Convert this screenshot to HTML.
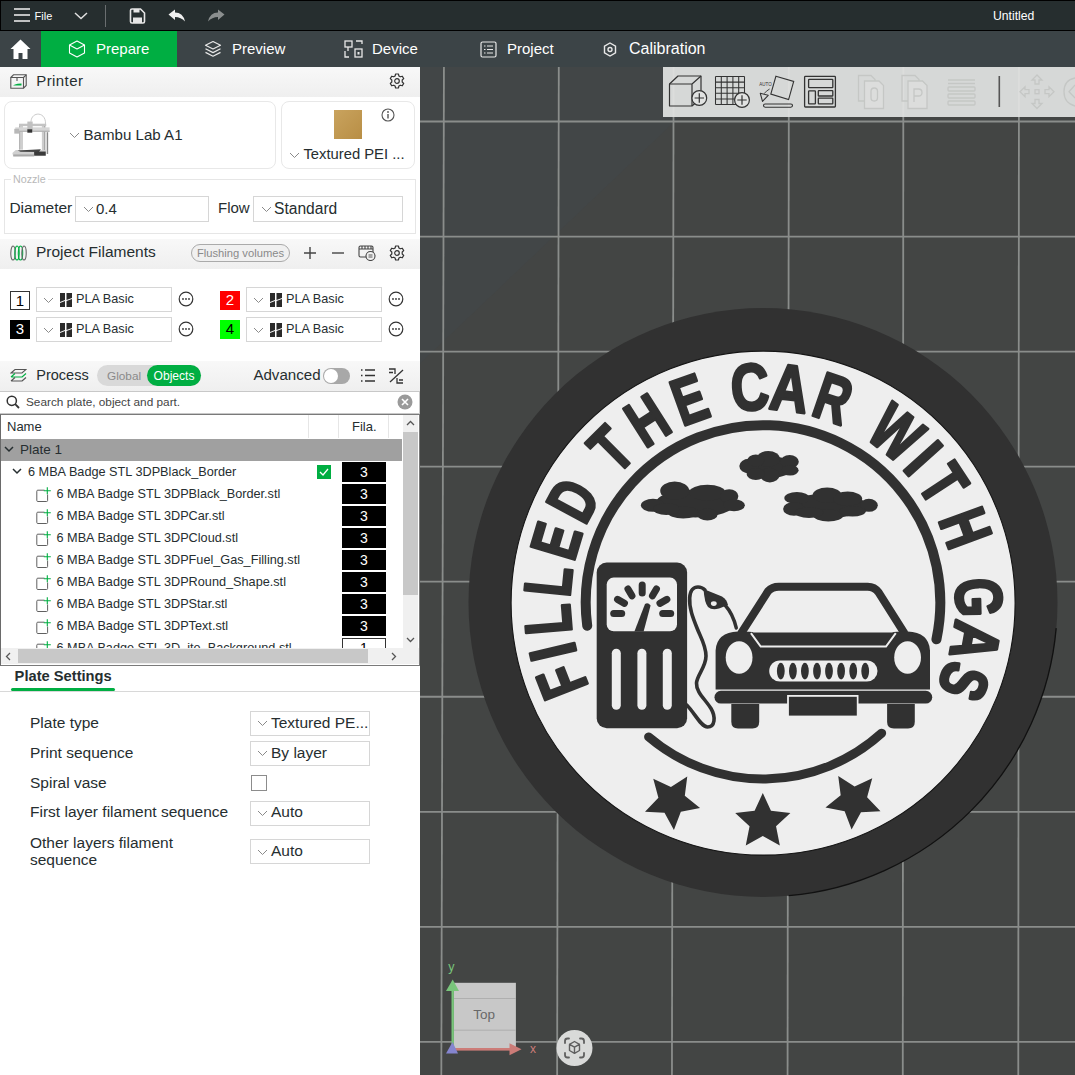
<!DOCTYPE html>
<html><head><meta charset="utf-8">
<style>
*{margin:0;padding:0;box-sizing:border-box}
html,body{width:1075px;height:1075px;overflow:hidden;background:#fff;font-family:"Liberation Sans",sans-serif;color:#262e30}
.a{position:absolute;white-space:nowrap}
#top{position:absolute;left:0;top:0;width:1075px;height:31px;background:#262e2f;border-top:1px solid #000;border-left:1px solid #000;border-bottom:1px solid #000}
#tabs{position:absolute;left:0;top:31px;width:1075px;height:36px;background:#3c4447}
#left{position:absolute;left:0;top:67px;width:420px;height:1008px;background:#fff;overflow:hidden}
#vp{position:absolute;left:420px;top:67px;width:655px;height:1008px;background:#434544;overflow:hidden}
.hdr{position:absolute;left:0;width:420px;height:30px;background:linear-gradient(#f8f8f8,#efefef)}
.tw{color:#fff;font-size:15px}
.dd{position:absolute;border:1px solid #d6d6d6;background:#fff}
.chev{position:absolute;width:7px;height:7px;border-right:1px solid #8a8a8a;border-bottom:1px solid #8a8a8a;transform:rotate(45deg)}
.lbl{font-size:15.5px;color:#262e30}
.row{position:absolute;left:0;width:402px;height:22px}
.obj{font-size:12.7px;color:#262e30}
.fbox{position:absolute;left:342px;width:44px;height:20px;background:#000;color:#fff;font-size:14px;text-align:center;line-height:20px}
.part{position:absolute;left:36px;width:16px;height:16px}
</style></head><body>

<!-- TOP BAR -->
<div id="top">
  <svg class="a" style="left:12px;top:7.3px" width="18" height="14" viewBox="0 0 18 14"><g stroke="#f4f4f4" stroke-width="1.5"><line x1="1" y1="1" x2="17" y2="1"/><line x1="1" y1="7" x2="17" y2="7"/><line x1="1" y1="13" x2="17" y2="13"/></g></svg>
  <div class="a" style="left:33.6px;top:9px;font-size:11px;color:#fff">File</div>
  <svg class="a" style="left:73px;top:11px" width="14" height="8" viewBox="0 0 14 8"><polyline points="1,1 7,6.5 13,1" fill="none" stroke="#e0e0e0" stroke-width="1.5"/></svg>
  <div class="a" style="left:104px;top:4px;width:1px;height:22px;background:#6a6e70"></div>
  <svg class="a" style="left:128px;top:7px" width="17" height="16" viewBox="0 0 17 16"><path d="M1.5 2.5 Q1.5 1 3 1 L11.5 1 L15.5 5 L15.5 13.5 Q15.5 15 14 15 L3 15 Q1.5 15 1.5 13.5 Z" fill="none" stroke="#e6e6e6" stroke-width="1.6"/><rect x="4.5" y="1" width="6" height="3.5" fill="#e6e6e6"/><rect x="4" y="9.5" width="9" height="5.5" fill="#e6e6e6"/></svg>
  <svg class="a" style="left:167px;top:8px" width="18" height="14" viewBox="0 0 18 14"><path d="M0.5 5.5 L7 0.5 L7 3.5 Q15 3.5 17 12.5 Q13 8 7 8 L7 11 Z" fill="#f0f0f0"/></svg>
  <svg class="a" style="left:206px;top:8px" width="18" height="14" viewBox="0 0 18 14"><path d="M17.5 5.5 L11 0.5 L11 3.5 Q3 3.5 1 12.5 Q5 8 11 8 L11 11 Z" fill="#8a8e8e"/></svg>
  <div class="a" style="left:992px;top:8px;font-size:12.2px;color:#fff">Untitled</div>
</div>

<!-- TABS -->
<div id="tabs">
  <svg class="a" style="left:10px;top:8px" width="21" height="21" viewBox="0 0 21 21"><path d="M10.5 0.5 L20.5 10 L17.5 10 L17.5 20 L12.5 20 L12.5 14 L8.5 14 L8.5 20 L3.5 20 L3.5 10 L0.5 10 Z" fill="#fff"/></svg>
  <div class="a" style="left:41px;top:0;width:136px;height:36px;background:#00ae42"></div>
  <svg class="a" style="left:68px;top:9px" width="18" height="18" viewBox="0 0 18 18"><g fill="none" stroke="#fff" stroke-width="1.1" stroke-linejoin="round"><path d="M9 1 L16.5 5 L16.5 13 L9 17 L1.5 13 L1.5 5 Z"/><path d="M1.5 5 L9 9 L16.5 5"/></g></svg>
  <div class="a tw" style="left:96px;top:9px">Prepare</div>
  <svg class="a" style="left:204px;top:9px" width="18" height="18" viewBox="0 0 18 18"><g fill="none" stroke="#e8e8e8" stroke-width="1.2" stroke-linejoin="round"><path d="M9 1.5 L16.5 5.2 L9 9 L1.5 5.2 Z"/><path d="M1.5 8.8 L9 12.6 L16.5 8.8"/><path d="M1.5 12.4 L9 16.2 L16.5 12.4"/></g></svg>
  <div class="a tw" style="left:232px;top:9px">Preview</div>
  <svg class="a" style="left:344px;top:9px" width="20" height="18" viewBox="0 0 20 18"><g fill="none" stroke="#e8e8e8" stroke-width="1.3"><rect x="1" y="1" width="7" height="6"/><path d="M12 1 L18 1 L18 4 M1 11 L1 17 L5 17 M4 7 L4 11"/><rect x="11" y="9" width="7" height="8"/><rect x="13.5" y="12" width="2" height="2.5" fill="#e8e8e8" stroke="none"/></g></svg>
  <div class="a tw" style="left:372px;top:9px">Device</div>
  <svg class="a" style="left:480px;top:10px" width="17" height="17" viewBox="0 0 17 17"><g fill="none" stroke="#e8e8e8" stroke-width="1.2"><rect x="1" y="1" width="15" height="15" rx="1.5"/><path d="M4 5 L5.5 5 M7 5 L13 5 M4 8.5 L5.5 8.5 M7 8.5 L13 8.5 M4 12 L5.5 12 M7 12 L13 12"/></g></svg>
  <div class="a tw" style="left:507px;top:9px">Project</div>
  <svg class="a" style="left:603px;top:11px" width="14" height="15" viewBox="0 0 14 15"><g fill="none" stroke="#e8e8e8" stroke-width="1.4"><path d="M7 1 L12.5 4.2 L12.5 10.8 L7 14 L1.5 10.8 L1.5 4.2 Z"/><circle cx="7" cy="7.5" r="2"/></g></svg>
  <div class="a tw" style="left:629px;top:9px;font-size:16px">Calibration</div>
</div>

<div id="left">
  <!-- Printer header (page y 67-97) -->
  <div class="hdr" style="top:0"></div>
  <svg class="a" style="left:10px;top:7px" width="17" height="15" viewBox="0 0 17 15"><g fill="none" stroke="#555" stroke-width="1.1"><path d="M0.8 3.5 L3.5 0.8 L16.2 0.8 L16.2 11.5 L13.5 14.2 L0.8 14.2 Z"/><path d="M0.8 3.5 L13.5 3.5 L13.5 14.2 M13.5 3.5 L16.2 0.8"/><path d="M7 4 L7 7"/></g><path d="M3 11.5 L11.5 11.5 L11.5 9.5 Q7 9.5 5 10.5 Z" fill="#00ae42"/></svg>
  <div class="a" style="left:36.3px;top:4.8px;font-size:15px;letter-spacing:0.4px">Printer</div>
  <svg class="a" style="left:389px;top:6px" width="16" height="16" viewBox="0 0 16 16"><path d="M6.6 1 L9.4 1 L9.9 3 L11.3 3.8 L13.3 3.2 L14.7 5.6 L13.2 7 L13.2 9 L14.7 10.4 L13.3 12.8 L11.3 12.2 L9.9 13 L9.4 15 L6.6 15 L6.1 13 L4.7 12.2 L2.7 12.8 L1.3 10.4 L2.8 9 L2.8 7 L1.3 5.6 L2.7 3.2 L4.7 3.8 L6.1 3 Z" fill="none" stroke="#333" stroke-width="1.2" stroke-linejoin="round"/><circle cx="8" cy="8" r="2.3" fill="none" stroke="#333" stroke-width="1.2"/></svg>

  <!-- printer card page y 101-168 -->
  <div class="a" style="left:4px;top:34px;width:272px;height:68px;border:1px solid #e8e8e8;border-radius:8px"></div>
  <svg class="a" style="left:8px;top:41px" width="48" height="52" viewBox="8 108 48 52">

<path d="M30.98 123.48 C30.01 110.90 46.22 110.90 45.49 123.97" fill="none" stroke="#b5b5b5" stroke-width="0.7"/>
<rect x="19.13" y="123.97" width="3.87" height="25.64" fill="#cfcfcf" />
<rect x="19.13" y="123.97" width="0.97" height="25.64" fill="#b0b0b0" />
<rect x="41.87" y="124.45" width="3.39" height="27.09" fill="#cdcdcd" />
<rect x="44.28" y="124.45" width="0.97" height="27.09" fill="#9a9a9a" />
<rect x="19.13" y="123.72" width="27.09" height="2.42" fill="#c4c4c4" />
<rect x="15.26" y="127.35" width="34.35" height="4.35" fill="#d6d6d6" />
<rect x="15.26" y="130.74" width="34.35" height="0.97" fill="#a8a8a8" />
<rect x="14.29" y="128.80" width="4.84" height="4.84" fill="#b8b8b8" />
<rect x="27.35" y="121.55" width="5.32" height="10.64" fill="#c0c0c0" />
<rect x="27.35" y="129.29" width="4.84" height="3.39" fill="#333" />
<rect x="46.70" y="132.19" width="1.45" height="21.77" fill="#888" />
<path d="M12.35 152.99 L15.74 150.09 L45.74 150.09 L45.74 155.90 L13.32 156.38 Z" fill="#d0d0d0"/>
<path d="M17.68 150.57 L40.90 149.36 L38.96 152.03 L20.58 151.78 Z" fill="#444"/>
<rect x="34.12" y="151.54" width="11.61" height="4.11" fill="#3a3a3a" />
<rect x="13.32" y="154.44" width="20.80" height="1.94" fill="#a8a8a8" />
</svg>
  <svg class="a" style="left:69px;top:65px" width="11" height="7" viewBox="0 0 11 7"><polyline points="1,1 5.5,5.5 10,1" fill="none" stroke="#8a8a8a" stroke-width="1"/></svg>
  <div class="a" style="left:83.5px;top:59px;font-size:15.1px">Bambu Lab A1</div>

  <!-- plate card -->
  <div class="a" style="left:281px;top:34px;width:134px;height:68px;border:1px solid #e8e8e8;border-radius:8px"></div>
  <div class="a" style="left:334px;top:43px;width:28px;height:29px;background:linear-gradient(135deg,#c9a35e,#b88e45)"></div>
  <svg class="a" style="left:381px;top:41px" width="14" height="14" viewBox="0 0 14 14"><circle cx="7" cy="7" r="6" fill="none" stroke="#555" stroke-width="1.1"/><rect x="6.3" y="6" width="1.4" height="4.5" fill="#555"/><circle cx="7" cy="4" r="0.9" fill="#555"/></svg>
  <svg class="a" style="left:289px;top:85px" width="11" height="7" viewBox="0 0 11 7"><polyline points="1,1 5.5,5.5 10,1" fill="none" stroke="#8a8a8a" stroke-width="1"/></svg>
  <div class="a" style="left:303.4px;top:79px;font-size:14.8px">Textured PEI ...</div>

  <!-- Nozzle fieldset page y 179-233 -->
  <div class="a" style="left:4px;top:112px;width:412px;height:55px;border:1px solid #e6e6e6"></div>
  <div class="a" style="left:11px;top:105px;padding:0 2px;background:#fff;font-size:10.7px;color:#b8b8b8;margin-top:1px">Nozzle</div>
  <div class="a" style="left:9.4px;top:132.3px;font-size:15.5px">Diameter</div>
  <div class="dd" style="left:75px;top:129px;width:134px;height:26px"></div>
  <svg class="a" style="left:83px;top:139px" width="11" height="7" viewBox="0 0 11 7"><polyline points="1,1 5.5,5.5 10,1" fill="none" stroke="#8a8a8a" stroke-width="1"/></svg>
  <div class="a" style="left:96px;top:133px;font-size:15px">0.4</div>
  <div class="a" style="left:218px;top:132px;font-size:15px">Flow</div>
  <div class="dd" style="left:253px;top:129px;width:150px;height:26px"></div>
  <svg class="a" style="left:261px;top:139px" width="11" height="7" viewBox="0 0 11 7"><polyline points="1,1 5.5,5.5 10,1" fill="none" stroke="#8a8a8a" stroke-width="1"/></svg>
  <div class="a" style="left:274px;top:133px;font-size:15.6px">Standard</div>

  <!-- Project Filaments header page y 239-268 -->
  <div class="hdr" style="top:172px;height:30px"></div>
  <svg class="a" style="left:10px;top:178px" width="17" height="16" viewBox="0 0 17 16"><g fill="none" stroke-width="1.1"><ellipse cx="3" cy="8" rx="2.2" ry="7" stroke="#666"/><ellipse cx="7" cy="8" rx="2.2" ry="7" stroke="#00ae42"/><ellipse cx="10.5" cy="8" rx="2.2" ry="7" stroke="#00ae42"/><ellipse cx="14" cy="8" rx="2.2" ry="7" stroke="#666"/></g></svg>
  <div class="a" style="left:36px;top:176px;font-size:15.5px">Project Filaments</div>
  <div class="a" style="left:191px;top:177px;width:99px;height:18px;border:1px solid #aaa;border-radius:9px;background:#f0f0f0;font-size:11.2px;color:#8a8a8a;text-align:center;line-height:16px">Flushing volumes</div>
  <svg class="a" style="left:303px;top:179px" width="14" height="14" viewBox="0 0 14 14"><path d="M7 1 L7 13 M1 7 L13 7" stroke="#444" stroke-width="1.4"/></svg>
  <svg class="a" style="left:331px;top:179px" width="14" height="14" viewBox="0 0 14 14"><path d="M1 7 L13 7" stroke="#444" stroke-width="1.4"/></svg>
  <svg class="a" style="left:358px;top:177px" width="18" height="17" viewBox="0 0 18 17"><g fill="none" stroke="#444" stroke-width="1.1"><rect x="1" y="2" width="14" height="11" rx="1.5"/><path d="M1 5 L15 5 M4 2 L4 5 M7 2 L7 5 M10 2 L10 5 M13 2 L13 5"/></g><circle cx="12.5" cy="12" r="4.5" fill="#f2f2f2" stroke="#444" stroke-width="1.1"/><path d="M10.5 11 L14.5 11 M10.5 13 L14.5 13" stroke="#444" stroke-width="0.9"/></svg>
  <svg class="a" style="left:389px;top:178px" width="16" height="16" viewBox="0 0 16 16"><path d="M6.6 1 L9.4 1 L9.9 3 L11.3 3.8 L13.3 3.2 L14.7 5.6 L13.2 7 L13.2 9 L14.7 10.4 L13.3 12.8 L11.3 12.2 L9.9 13 L9.4 15 L6.6 15 L6.1 13 L4.7 12.2 L2.7 12.8 L1.3 10.4 L2.8 9 L2.8 7 L1.3 5.6 L2.7 3.2 L4.7 3.8 L6.1 3 Z" fill="none" stroke="#333" stroke-width="1.2" stroke-linejoin="round"/><circle cx="8" cy="8" r="2.3" fill="none" stroke="#333" stroke-width="1.2"/></svg>

<div class="a" style="left:10px;top:224px;width:20px;height:19px;background:#fff;border:1px solid #333;color:#000;font-size:15px;text-align:center;line-height:18px">1</div>
<div class="dd" style="left:36px;top:220px;width:136px;height:25px"></div>
<svg class="a" style="left:43px;top:230px" width="11" height="7" viewBox="0 0 11 7"><polyline points="1,1 5.5,5.5 10,1" fill="none" stroke="#8a8a8a" stroke-width="1"/></svg>
<svg class="a" style="left:60px;top:226px" width="12" height="14" viewBox="0 0 12 14"><path d="M0 0 L5 0 L5 7 L0 9 Z M0 10 L5 8 L5 14 L0 14 Z M6.5 0 L12 0 L12 5 L6.5 7 Z M6.5 8 L12 6 L12 14 L6.5 14 Z" fill="#2a2a2a"/></svg>
<div class="a" style="left:76px;top:225.1px;font-size:12.7px;">PLA Basic</div>
<svg class="a" style="left:178px;top:224px" width="16" height="16" viewBox="0 0 16 16"><circle cx="8" cy="8" r="6.8" fill="none" stroke="#333" stroke-width="1.2"/><circle cx="5" cy="8" r="0.9" fill="#333"/><circle cx="8" cy="8" r="0.9" fill="#333"/><circle cx="11" cy="8" r="0.9" fill="#333"/></svg>
<div class="a" style="left:10px;top:253px;width:20px;height:19px;background:#000;color:#fff;font-size:15px;text-align:center;line-height:18px">3</div>
<div class="dd" style="left:36px;top:250px;width:136px;height:25px"></div>
<svg class="a" style="left:43px;top:260px" width="11" height="7" viewBox="0 0 11 7"><polyline points="1,1 5.5,5.5 10,1" fill="none" stroke="#8a8a8a" stroke-width="1"/></svg>
<svg class="a" style="left:60px;top:256px" width="12" height="14" viewBox="0 0 12 14"><path d="M0 0 L5 0 L5 7 L0 9 Z M0 10 L5 8 L5 14 L0 14 Z M6.5 0 L12 0 L12 5 L6.5 7 Z M6.5 8 L12 6 L12 14 L6.5 14 Z" fill="#2a2a2a"/></svg>
<div class="a" style="left:76px;top:255.4px;font-size:12.7px;">PLA Basic</div>
<svg class="a" style="left:178px;top:254px" width="16" height="16" viewBox="0 0 16 16"><circle cx="8" cy="8" r="6.8" fill="none" stroke="#333" stroke-width="1.2"/><circle cx="5" cy="8" r="0.9" fill="#333"/><circle cx="8" cy="8" r="0.9" fill="#333"/><circle cx="11" cy="8" r="0.9" fill="#333"/></svg>
<div class="a" style="left:220px;top:224px;width:20px;height:19px;background:#ff0000;color:#fff;font-size:15px;text-align:center;line-height:18px">2</div>
<div class="dd" style="left:246px;top:220px;width:136px;height:25px"></div>
<svg class="a" style="left:253px;top:230px" width="11" height="7" viewBox="0 0 11 7"><polyline points="1,1 5.5,5.5 10,1" fill="none" stroke="#8a8a8a" stroke-width="1"/></svg>
<svg class="a" style="left:270px;top:226px" width="12" height="14" viewBox="0 0 12 14"><path d="M0 0 L5 0 L5 7 L0 9 Z M0 10 L5 8 L5 14 L0 14 Z M6.5 0 L12 0 L12 5 L6.5 7 Z M6.5 8 L12 6 L12 14 L6.5 14 Z" fill="#2a2a2a"/></svg>
<div class="a" style="left:286px;top:225.1px;font-size:12.7px;">PLA Basic</div>
<svg class="a" style="left:388px;top:224px" width="16" height="16" viewBox="0 0 16 16"><circle cx="8" cy="8" r="6.8" fill="none" stroke="#333" stroke-width="1.2"/><circle cx="5" cy="8" r="0.9" fill="#333"/><circle cx="8" cy="8" r="0.9" fill="#333"/><circle cx="11" cy="8" r="0.9" fill="#333"/></svg>
<div class="a" style="left:220px;top:253px;width:20px;height:19px;background:#00ff00;color:#000;font-size:15px;text-align:center;line-height:18px">4</div>
<div class="dd" style="left:246px;top:250px;width:136px;height:25px"></div>
<svg class="a" style="left:253px;top:260px" width="11" height="7" viewBox="0 0 11 7"><polyline points="1,1 5.5,5.5 10,1" fill="none" stroke="#8a8a8a" stroke-width="1"/></svg>
<svg class="a" style="left:270px;top:256px" width="12" height="14" viewBox="0 0 12 14"><path d="M0 0 L5 0 L5 7 L0 9 Z M0 10 L5 8 L5 14 L0 14 Z M6.5 0 L12 0 L12 5 L6.5 7 Z M6.5 8 L12 6 L12 14 L6.5 14 Z" fill="#2a2a2a"/></svg>
<div class="a" style="left:286px;top:255.4px;font-size:12.7px;">PLA Basic</div>
<svg class="a" style="left:388px;top:254px" width="16" height="16" viewBox="0 0 16 16"><circle cx="8" cy="8" r="6.8" fill="none" stroke="#333" stroke-width="1.2"/><circle cx="5" cy="8" r="0.9" fill="#333"/><circle cx="8" cy="8" r="0.9" fill="#333"/><circle cx="11" cy="8" r="0.9" fill="#333"/></svg>

  <!-- Process header page y 361-390 -->
  <div class="hdr" style="top:294px;height:30px"></div>
  <svg class="a" style="left:10px;top:301px" width="17" height="16" viewBox="0 0 17 16"><g fill="none" stroke-width="1.1"><path d="M1 5 L5 1.5 L16 1.5 L12 5 Z" stroke="#555"/><path d="M1 9 L5 5.5 M12 9 L16 5.5 M1 9 L12 9" stroke="#00ae42"/><path d="M1 13 L5 9.5 M12 13 L16 9.5 M1 13 L12 13" stroke="#555"/></g></svg>
  <div class="a" style="left:36.3px;top:300px;font-size:14.5px">Process</div>
  <div class="a" style="left:97px;top:298px;width:104px;height:21px;border-radius:11px;background:#d9d9d9"></div>
  <div class="a" style="left:107px;top:302px;font-size:11.8px;color:#8a8a8a">Global</div>
  <div class="a" style="left:147px;top:298px;width:54px;height:21px;border-radius:11px;background:#00ae42"></div>
  <div class="a" style="left:153.5px;top:302px;font-size:12.1px;color:#fff">Objects</div>
  <div class="a" style="left:253.4px;top:299px;font-size:15.1px">Advanced</div>
  <div class="a" style="left:323px;top:301px;width:27px;height:16px;border-radius:8px;background:#a8a8a8"></div>
  <div class="a" style="left:324px;top:302px;width:14px;height:14px;border-radius:7px;background:#fff"></div>
  <svg class="a" style="left:360px;top:301px" width="16" height="15" viewBox="0 0 16 15"><g stroke="#333" stroke-width="1.4"><path d="M5 2 L15 2 M5 7.5 L15 7.5 M5 13 L15 13"/><path d="M1 2 L2.5 2 M1 7.5 L2.5 7.5 M1 13 L2.5 13"/></g></svg>
  <svg class="a" style="left:388px;top:301px" width="16" height="16" viewBox="0 0 16 16"><g fill="none" stroke="#333" stroke-width="1.3"><path d="M1 1 L7 1 L7 6"/><path d="M15 2 L2 14"/><path d="M9 10 L9 15 L15 15"/><path d="M1 4.5 L5 4.5 M11 12 L15 12"/></g></svg>

  <!-- search page y 391-413 -->
  <div class="a" style="left:0;top:324px;width:420px;height:23px;border:1px solid #c8c8c8;border-left:none;background:#fff"></div>
  <svg class="a" style="left:6px;top:328px" width="14" height="14" viewBox="0 0 14 14"><circle cx="5.8" cy="5.8" r="4.6" fill="none" stroke="#333" stroke-width="1.5"/><path d="M9.2 9.2 L13 13" stroke="#333" stroke-width="1.8"/></svg>
  <div class="a" style="left:26px;top:328px;font-size:11.8px;color:#444">Search plate, object and part.</div>
  <svg class="a" style="left:397px;top:327px" width="16" height="16" viewBox="0 0 16 16"><circle cx="8" cy="8" r="7.5" fill="#9a9a9a"/><path d="M5 5 L11 11 M11 5 L5 11" stroke="#fff" stroke-width="1.6"/></svg>

<div class="a" style="left:0;top:347px;width:420px;height:252px;border:1px solid #7a7a7a;border-left:1px solid #6a6a6a"></div>
<div class="a" style="left:7px;top:352.0px;font-size:13px;">Name</div>
<div class="a" style="left:308px;top:348px;width:1px;height:23px;background:#e6e6e6"></div>
<div class="a" style="left:338px;top:348px;width:1px;height:23px;background:#e6e6e6"></div>
<div class="a" style="left:388px;top:348px;width:1px;height:23px;background:#e6e6e6"></div>
<div class="a" style="left:352px;top:352.0px;font-size:13px;">Fila.</div>
<div class="a" style="left:1px;top:372px;width:401px;height:22px;background:#a0a0a0"></div>
<svg class="a" style="left:4px;top:379px" width="10" height="7" viewBox="0 0 10 7"><polyline points="1,1 5,5 9,1" fill="none" stroke="#262e30" stroke-width="1.5"/></svg>
<div class="a" style="left:20px;top:375.1px;font-size:13.5px;">Plate 1</div>
<svg class="a" style="left:12px;top:401px" width="10" height="7" viewBox="0 0 10 7"><polyline points="1,1 5,5 9,1" fill="none" stroke="#262e30" stroke-width="1.5"/></svg>
<div class="a" style="left:28px;top:397.8px;font-size:12.7px;">6 MBA Badge STL 3DPBlack_Border</div>
<div class="a" style="left:317px;top:398px;width:14px;height:14px;background:#00ae42"></div>
<svg class="a" style="left:317px;top:398px" width="14" height="14" viewBox="0 0 14 14"><polyline points="3,7 6,10 11,4" fill="none" stroke="#fff" stroke-width="1.3"/></svg>
<div class="fbox" style="top:395px">3</div>
<div class="a" style="left:0;top:0;width:420px;height:581px;overflow:hidden"><svg class="a" style="left:36px;top:418px" width="16" height="18" viewBox="0 0 16 18"><path d="M8.5 5.2 L1.8 5.2 Q0.8 5.2 0.8 6.2 L0.8 15.5 Q0.8 16.5 1.8 16.5 L10.6 16.5 Q11.6 16.5 11.6 15.5 L11.6 9.5" fill="none" stroke="#606060" stroke-width="1"/><path d="M11.3 2.3 L11.3 9.3 M7.8 5.8 L14.8 5.8" stroke="#00ae42" stroke-width="1.1"/></svg>
<div class="a" style="left:56.5px;top:419.9px;font-size:12.7px;">6 MBA Badge STL 3DPBlack_Border.stl</div>
<div class="fbox" style="top:417px">3</div>
<svg class="a" style="left:36px;top:440px" width="16" height="18" viewBox="0 0 16 18"><path d="M8.5 5.2 L1.8 5.2 Q0.8 5.2 0.8 6.2 L0.8 15.5 Q0.8 16.5 1.8 16.5 L10.6 16.5 Q11.6 16.5 11.6 15.5 L11.6 9.5" fill="none" stroke="#606060" stroke-width="1"/><path d="M11.3 2.3 L11.3 9.3 M7.8 5.8 L14.8 5.8" stroke="#00ae42" stroke-width="1.1"/></svg>
<div class="a" style="left:56.5px;top:441.9px;font-size:12.7px;">6 MBA Badge STL 3DPCar.stl</div>
<div class="fbox" style="top:439px">3</div>
<svg class="a" style="left:36px;top:462px" width="16" height="18" viewBox="0 0 16 18"><path d="M8.5 5.2 L1.8 5.2 Q0.8 5.2 0.8 6.2 L0.8 15.5 Q0.8 16.5 1.8 16.5 L10.6 16.5 Q11.6 16.5 11.6 15.5 L11.6 9.5" fill="none" stroke="#606060" stroke-width="1"/><path d="M11.3 2.3 L11.3 9.3 M7.8 5.8 L14.8 5.8" stroke="#00ae42" stroke-width="1.1"/></svg>
<div class="a" style="left:56.5px;top:463.9px;font-size:12.7px;">6 MBA Badge STL 3DPCloud.stl</div>
<div class="fbox" style="top:461px">3</div>
<svg class="a" style="left:36px;top:484px" width="16" height="18" viewBox="0 0 16 18"><path d="M8.5 5.2 L1.8 5.2 Q0.8 5.2 0.8 6.2 L0.8 15.5 Q0.8 16.5 1.8 16.5 L10.6 16.5 Q11.6 16.5 11.6 15.5 L11.6 9.5" fill="none" stroke="#606060" stroke-width="1"/><path d="M11.3 2.3 L11.3 9.3 M7.8 5.8 L14.8 5.8" stroke="#00ae42" stroke-width="1.1"/></svg>
<div class="a" style="left:56.5px;top:485.9px;font-size:12.7px;">6 MBA Badge STL 3DPFuel_Gas_Filling.stl</div>
<div class="fbox" style="top:483px">3</div>
<svg class="a" style="left:36px;top:506px" width="16" height="18" viewBox="0 0 16 18"><path d="M8.5 5.2 L1.8 5.2 Q0.8 5.2 0.8 6.2 L0.8 15.5 Q0.8 16.5 1.8 16.5 L10.6 16.5 Q11.6 16.5 11.6 15.5 L11.6 9.5" fill="none" stroke="#606060" stroke-width="1"/><path d="M11.3 2.3 L11.3 9.3 M7.8 5.8 L14.8 5.8" stroke="#00ae42" stroke-width="1.1"/></svg>
<div class="a" style="left:56.5px;top:507.9px;font-size:12.7px;">6 MBA Badge STL 3DPRound_Shape.stl</div>
<div class="fbox" style="top:505px">3</div>
<svg class="a" style="left:36px;top:528px" width="16" height="18" viewBox="0 0 16 18"><path d="M8.5 5.2 L1.8 5.2 Q0.8 5.2 0.8 6.2 L0.8 15.5 Q0.8 16.5 1.8 16.5 L10.6 16.5 Q11.6 16.5 11.6 15.5 L11.6 9.5" fill="none" stroke="#606060" stroke-width="1"/><path d="M11.3 2.3 L11.3 9.3 M7.8 5.8 L14.8 5.8" stroke="#00ae42" stroke-width="1.1"/></svg>
<div class="a" style="left:56.5px;top:529.9px;font-size:12.7px;">6 MBA Badge STL 3DPStar.stl</div>
<div class="fbox" style="top:527px">3</div>
<svg class="a" style="left:36px;top:550px" width="16" height="18" viewBox="0 0 16 18"><path d="M8.5 5.2 L1.8 5.2 Q0.8 5.2 0.8 6.2 L0.8 15.5 Q0.8 16.5 1.8 16.5 L10.6 16.5 Q11.6 16.5 11.6 15.5 L11.6 9.5" fill="none" stroke="#606060" stroke-width="1"/><path d="M11.3 2.3 L11.3 9.3 M7.8 5.8 L14.8 5.8" stroke="#00ae42" stroke-width="1.1"/></svg>
<div class="a" style="left:56.5px;top:551.9px;font-size:12.7px;">6 MBA Badge STL 3DPText.stl</div>
<div class="fbox" style="top:549px">3</div>
<svg class="a" style="left:36px;top:572px" width="16" height="18" viewBox="0 0 16 18"><path d="M8.5 5.2 L1.8 5.2 Q0.8 5.2 0.8 6.2 L0.8 15.5 Q0.8 16.5 1.8 16.5 L10.6 16.5 Q11.6 16.5 11.6 15.5 L11.6 9.5" fill="none" stroke="#606060" stroke-width="1"/><path d="M11.3 2.3 L11.3 9.3 M7.8 5.8 L14.8 5.8" stroke="#00ae42" stroke-width="1.1"/></svg>
<div class="a" style="left:56.5px;top:573.9px;font-size:12.7px;">6 MBA Badge STL 3D_ite_Background.stl</div>
<div class="fbox" style="top:571px;background:#fff;color:#000;border:1px solid #333;line-height:18px">1</div></div>
<div class="a" style="left:403px;top:348px;width:15px;height:233px;background:#f0f0f0"></div>
<div class="a" style="left:403px;top:365px;width:15px;height:163px;background:#c8c8c8"></div>
<svg class="a" style="left:406px;top:353px" width="9" height="6" viewBox="0 0 9 6"><polyline points="1,5 4.5,1.5 8,5" fill="none" stroke="#555" stroke-width="1.3"/></svg>
<svg class="a" style="left:406px;top:570px" width="9" height="6" viewBox="0 0 9 6"><polyline points="1,1 4.5,4.5 8,1" fill="none" stroke="#555" stroke-width="1.3"/></svg>
<div class="a" style="left:1px;top:581px;width:418px;height:16px;background:#f0f0f0"></div>
<div class="a" style="left:18px;top:582px;width:350px;height:14px;background:#c8c8c8"></div>
<svg class="a" style="left:5px;top:585px" width="6" height="9" viewBox="0 0 6 9"><polyline points="5,1 1.5,4.5 5,8" fill="none" stroke="#555" stroke-width="1.3"/></svg>
<svg class="a" style="left:391px;top:585px" width="6" height="9" viewBox="0 0 6 9"><polyline points="1,1 4.5,4.5 1,8" fill="none" stroke="#555" stroke-width="1.3"/></svg>

  <!-- Plate Settings -->
  <div class="a" style="left:14.6px;top:601.4px;font-size:14.7px;font-weight:bold;color:#262e30">Plate Settings</div>
  <div class="a" style="left:11px;top:621px;width:104px;height:3px;border-radius:2px;background:#00ae42"></div>
  <div class="a" style="left:0;top:624px;width:420px;height:1px;background:#d8d8d8"></div>

<div class="a" style="left:30px;top:646.5px;font-size:15.5px;">Plate type</div>
<div class="a" style="left:30px;top:677.0px;font-size:15.5px;">Print sequence</div>
<div class="a" style="left:30px;top:707.1px;font-size:15.5px;">Spiral vase</div>
<div class="a" style="left:30px;top:736.4px;font-size:15.5px;">First layer filament sequence</div>
<div class="a" style="left:30px;top:766.8px;font-size:15.5px;">Other layers filament</div>
<div class="a" style="left:30px;top:784.4px;font-size:15.5px;">sequence</div>
<div class="dd" style="left:250px;top:644px;width:120px;height:25px"></div>
<svg class="a" style="left:257px;top:653px" width="11" height="7" viewBox="0 0 11 7"><polyline points="1,1 5.5,5.5 10,1" fill="none" stroke="#8a8a8a" stroke-width="1"/></svg>
<div class="a" style="left:271px;top:646.5px;font-size:15.5px;">Textured PE...</div>
<div class="dd" style="left:250px;top:674px;width:120px;height:25px"></div>
<svg class="a" style="left:257px;top:683px" width="11" height="7" viewBox="0 0 11 7"><polyline points="1,1 5.5,5.5 10,1" fill="none" stroke="#8a8a8a" stroke-width="1"/></svg>
<div class="a" style="left:271px;top:676.6px;font-size:15.5px;">By layer</div>
<div class="dd" style="left:250px;top:734px;width:120px;height:25px"></div>
<svg class="a" style="left:257px;top:743px" width="11" height="7" viewBox="0 0 11 7"><polyline points="1,1 5.5,5.5 10,1" fill="none" stroke="#8a8a8a" stroke-width="1"/></svg>
<div class="a" style="left:271px;top:736.4px;font-size:15.5px;">Auto</div>
<div class="dd" style="left:250px;top:772px;width:120px;height:25px"></div>
<svg class="a" style="left:257px;top:782px" width="11" height="7" viewBox="0 0 11 7"><polyline points="1,1 5.5,5.5 10,1" fill="none" stroke="#8a8a8a" stroke-width="1"/></svg>
<div class="a" style="left:271px;top:775.4px;font-size:15.5px;">Auto</div>
<div class="a" style="left:251px;top:708px;width:16px;height:16px;border:1px solid #8c8c8c;background:#fff"></div>
</div>
<div id="vp"><svg class="a" style="left:0;top:0" width="655" height="1008" viewBox="420 67 655 1008">
<polygon points="420,67 732,67 420,363.5" fill="#424647"/>
<g stroke="#8a8d8b" stroke-width="1.8">
<line x1="443.94" y1="67" x2="441.31" y2="1075"/>
<line x1="558.79" y1="67" x2="557.15" y2="1075"/>
<line x1="673.59" y1="67" x2="671.95" y2="1075"/>
<line x1="788.87" y1="67" x2="787.56" y2="1075"/>
<line x1="903.33" y1="67" x2="902.78" y2="1075"/>
<line x1="1018.94" y1="67" x2="1018.28" y2="1075"/>
<line x1="420" y1="121.50" x2="1075" y2="121.50"/>
<line x1="420" y1="236.55" x2="1075" y2="236.55"/>
<line x1="420" y1="351.60" x2="1075" y2="351.60"/>
<line x1="420" y1="466.65" x2="1075" y2="466.65"/>
<line x1="420" y1="581.70" x2="1075" y2="581.70"/>
<line x1="420" y1="696.75" x2="1075" y2="696.75"/>
<line x1="420" y1="811.80" x2="1075" y2="811.80"/>
<line x1="420" y1="926.85" x2="1075" y2="926.85"/>
<line x1="420" y1="1041.90" x2="1075" y2="1041.90"/>
</g>
<circle cx="763" cy="602.5" r="294.5" fill="#313131"/>
<path d="M1056.18 628.15 A294.3 294.3 0 0 1 788.65 895.68" fill="none" stroke="#111" stroke-width="1.3"/>
<circle cx="763.1" cy="603.1" r="252" fill="#eeeeee" stroke="#151515" stroke-width="1.1"/>
<path d="M587.24 625.80 A177.3 177.3 0 1 1 936.43 639.36" fill="none" stroke="#313131" stroke-width="10" stroke-linecap="round"/>
<path d="M648.61 736.91 A176.5 176.5 0 0 0 881.67 733.15" fill="none" stroke="#313131" stroke-width="9" stroke-linecap="round"/>
<polygon points="653.26,778.78 670.93,787.11 687.27,776.41 684.81,795.79 700.04,808.02 680.85,811.66 673.92,829.93 664.52,812.80 645.01,811.86 658.39,797.63" fill="#313131"/>
<polygon points="762.80,793.00 770.98,810.74 790.38,813.04 776.04,826.30 779.85,845.46 762.80,835.92 745.75,845.46 749.56,826.30 735.22,813.04 754.62,810.74" fill="#313131"/>
<polygon points="872.24,778.28 867.11,797.13 880.49,811.36 860.98,812.30 851.58,829.43 844.65,811.16 825.46,807.52 840.69,795.29 838.23,775.91 854.57,786.61" fill="#313131"/>
<g fill="#313131" stroke="#313131" stroke-width="2.8" stroke-linejoin="round" font-family="Liberation Sans" font-weight="bold" font-size="66" text-anchor="middle">
<text transform="translate(763 602.5) rotate(248.6) translate(0 -193) scale(0.74 1)">F</text>
<text transform="translate(763 602.5) rotate(256.8) translate(0 -193) scale(0.8 1)">I</text>
<text transform="translate(763 602.5) rotate(265.4) translate(0 -193) scale(0.74 1)">L</text>
<text transform="translate(763 602.5) rotate(275.7) translate(0 -193) scale(0.74 1)">L</text>
<text transform="translate(763 602.5) rotate(286.6) translate(0 -193) scale(0.74 1)">E</text>
<text transform="translate(763 602.5) rotate(298.3) translate(0 -193) scale(0.74 1)">D</text>
<text transform="translate(763 602.5) rotate(315.2) translate(0 -193) scale(0.74 1)">T</text>
<text transform="translate(763 602.5) rotate(327.6) translate(0 -193) scale(0.74 1)">H</text>
<text transform="translate(763 602.5) rotate(340.1) translate(0 -193) scale(0.74 1)">E</text>
<text transform="translate(763 602.5) rotate(356.5) translate(0 -193) scale(0.8 1)">C</text>
<text transform="translate(763 602.5) rotate(367.1) translate(0 -193) scale(0.8 1)">A</text>
<text transform="translate(763 602.5) rotate(379.0) translate(0 -193) scale(0.72 1)">R</text>
<text transform="translate(763 602.5) rotate(398.1) translate(0 -193) scale(0.74 1)">W</text>
<text transform="translate(763 602.5) rotate(408.0) translate(0 -193) scale(0.8 1)">I</text>
<text transform="translate(763 602.5) rotate(416.7) translate(0 -193) scale(0.74 1)">T</text>
<text transform="translate(763 602.5) rotate(429.8) translate(0 -193) scale(0.74 1)">H</text>
<text transform="translate(763 602.5) rotate(448.7) translate(0 -193) scale(0.76 1)">G</text>
<text transform="translate(763 602.5) rotate(100.3) translate(0 -193) scale(0.8 1)">A</text>
<text transform="translate(763 602.5) rotate(111.5) translate(0 -193) scale(0.76 1)">S</text>
</g>
<g fill="#313131">
<ellipse cx="695.3" cy="503.4" rx="39.9" ry="14.0"/>
<ellipse cx="653.0" cy="505.3" rx="12.1" ry="6.5"/>
<ellipse cx="674.7" cy="490.8" rx="14.5" ry="9.2"/>
<ellipse cx="707.4" cy="492.7" rx="18.1" ry="8.0"/>
<ellipse cx="729.2" cy="496.1" rx="9.2" ry="6.8"/>
<ellipse cx="734.0" cy="505.3" rx="10.9" ry="6.0"/>
<ellipse cx="683.2" cy="512.6" rx="15.7" ry="6.0"/>
<ellipse cx="707.4" cy="514.5" rx="10.2" ry="6.0"/>
<ellipse cx="666.3" cy="508.9" rx="13.3" ry="6.0"/>
<ellipse cx="769.1" cy="467.1" rx="25.4" ry="10.9"/>
<ellipse cx="749.0" cy="466.1" rx="9.7" ry="7.3"/>
<ellipse cx="768.3" cy="458.9" rx="11.6" ry="8.0"/>
<ellipse cx="789.6" cy="461.8" rx="9.2" ry="6.8"/>
<ellipse cx="790.1" cy="470.2" rx="8.5" ry="5.3"/>
<ellipse cx="769.8" cy="475.1" rx="9.7" ry="7.3"/>
<ellipse cx="755.8" cy="473.9" rx="9.2" ry="6.0"/>
<ellipse cx="755.8" cy="460.6" rx="8.5" ry="6.0"/>
<ellipse cx="828.3" cy="505.8" rx="38.7" ry="12.1"/>
<ellipse cx="796.9" cy="498.0" rx="12.6" ry="6.0"/>
<ellipse cx="794.0" cy="508.9" rx="10.9" ry="6.8"/>
<ellipse cx="827.1" cy="495.1" rx="14.5" ry="7.7"/>
<ellipse cx="847.7" cy="498.8" rx="14.5" ry="7.3"/>
<ellipse cx="868.9" cy="505.3" rx="8.9" ry="6.5"/>
<ellipse cx="828.3" cy="515.5" rx="15.0" ry="6.0"/>
<ellipse cx="809.0" cy="512.6" rx="14.5" ry="5.3"/>
<ellipse cx="852.5" cy="511.3" rx="13.3" ry="5.3"/>
</g>
<rect x="596.7" y="562.5" width="90.4" height="165.7" rx="10" fill="#313131"/>
<rect x="606.7" y="577.6" width="70.3" height="53.6" rx="7" fill="#eeeeee"/>
<g transform="translate(0 -0.8)"><g stroke="#313131" stroke-width="7" stroke-linecap="round">
<line x1="621.70" y1="614.40" x2="613.70" y2="614.40"/>
<line x1="624.45" y1="604.15" x2="617.52" y2="600.15"/>
<line x1="631.95" y1="596.65" x2="627.95" y2="589.72"/>
<line x1="642.20" y1="593.90" x2="642.20" y2="585.90"/>
<line x1="652.45" y1="596.65" x2="656.45" y2="589.72"/>
<line x1="659.95" y1="604.15" x2="666.88" y2="600.15"/>
<line x1="662.70" y1="614.40" x2="670.70" y2="614.40"/>
</g></g>
<path d="M634.4 631.5 L643.6 631.5 L650.6 605.5 Q648 602 645 604 Z" fill="#313131"/>
<rect x="611.8" y="648.7" width="9" height="61" rx="4.5" fill="#eeeeee"/>
<rect x="637.4" y="648.7" width="9" height="61" rx="4.5" fill="#eeeeee"/>
<rect x="662.8" y="648.7" width="9" height="61" rx="4.5" fill="#eeeeee"/>
<path d="M686.7 705 C694 712 701 727 707.5 727 C715 727 716 717 711 708.5 C705 699 696 692 696.5 683 C697 675 706 667 706 656 C706 645 700 636 697 628 C693 618 689 608 689.7 598 C690 590 694 587 698 587 C701 587 703 588 705 590" fill="none" stroke="#313131" stroke-width="3.6" stroke-linecap="round" stroke-linejoin="round"/>
<path d="M703.5 589 L722 596.5 Q727 599.5 728 605 L719 608.5 Q712 610.5 708 607 Q704.5 603 703.5 589 Z" fill="#313131"/>
<ellipse cx="713.8" cy="603.6" rx="2.9" ry="2.3" fill="#eeeeee"/>
<path d="M725 605 Q733 614 736.3 628" fill="none" stroke="#313131" stroke-width="3.4" stroke-linecap="round"/>
<path d="M740.9 633.6 L768.1 591.2 Q772.6 586.1 780.4 586.7 L866.3 586.7 Q874.1 586.1 878.6 592.3 L904.7 633.6" fill="none" stroke="#313131" stroke-width="8" stroke-linejoin="round"/>
<path d="M715.6 689.4 L715.6 650.4 Q716.7 632.5 738.0 631.6 Q752.5 631.6 753.6 632.5 L892.0 632.5 Q894.2 631.6 907.6 631.6 Q928.8 632.5 930.0 650.4 L930.0 689.4 Z" fill="#313131"/>
<polyline points="750.9,633.2 760.7,646.6 886.0,646.6 895.8,633.2" fill="none" stroke="#eeeeee" stroke-width="2"/>
<ellipse cx="739.1" cy="657.5" rx="13.4" ry="16.2" fill="#eeeeee"/>
<ellipse cx="907.6" cy="657.5" rx="13.4" ry="16.2" fill="#eeeeee"/>
<rect x="769.2" y="660.4" width="108.3" height="21.2" rx="10.6" fill="#eeeeee"/>
<ellipse cx="780.8" cy="671.1" rx="3.9" ry="8.3" fill="#313131"/>
<ellipse cx="792.9" cy="671.1" rx="3.9" ry="8.3" fill="#313131"/>
<ellipse cx="804.9" cy="671.1" rx="3.9" ry="8.3" fill="#313131"/>
<ellipse cx="817.0" cy="671.1" rx="3.9" ry="8.3" fill="#313131"/>
<ellipse cx="829.0" cy="671.1" rx="3.9" ry="8.3" fill="#313131"/>
<ellipse cx="841.1" cy="671.1" rx="3.9" ry="8.3" fill="#313131"/>
<ellipse cx="853.2" cy="671.1" rx="3.9" ry="8.3" fill="#313131"/>
<ellipse cx="865.2" cy="671.1" rx="3.9" ry="8.3" fill="#313131"/>
<rect x="714.5" y="690.8" width="217.7" height="12.7" rx="6.4" fill="#313131"/>
<path d="M731.3 704.0 L759.2 704.0 L759.2 721.8 Q759.2 728.5 752.5 728.5 L738.0 728.5 Q731.3 728.5 731.3 721.8 Z" fill="#313131"/>
<path d="M887.1 704.0 L914.8 704.0 L914.8 721.8 Q914.8 728.5 908.1 728.5 L893.8 728.5 Q887.1 728.5 887.1 721.8 Z" fill="#313131"/>
<rect x="787.1" y="695.0" width="71.4" height="22.3" fill="#eeeeee"/>
<rect x="788.9" y="696.8" width="67.9" height="18.8" fill="#313131"/>
</svg>
<div class="a" style="left:243px;top:0;width:412px;height:50px;background:rgba(226,227,226,0.93)"></div>
<svg class="a" style="left:243px;top:0" width="412" height="50" viewBox="663 67 412 50">
<g fill="none" stroke="#333" stroke-width="1.2" stroke-linejoin="round"><path d="M669.5 84 L678 76 L701 76 L701 98 L692 106 L669.5 106 Z"/><path d="M669.5 84 L692 84 L692 106 M692 84 L701 76"/></g>
<circle cx="699.3" cy="98" r="7.4" fill="#e1e2e1" stroke="#333" stroke-width="1.2"/><path d="M699.3 93.3 L699.3 102.7 M694.6 98 L704 98" stroke="#333" stroke-width="1.2"/>
<path d="M715.5 76.5 L715.5 104.5 M715.5 76.5 L744.5 76.5 M721.3 76.5 L721.3 104.5 M715.5 82.1 L744.5 82.1 M727.1 76.5 L727.1 104.5 M715.5 87.7 L744.5 87.7 M732.9 76.5 L732.9 104.5 M715.5 93.3 L744.5 93.3 M738.7 76.5 L738.7 104.5 M715.5 98.9 L744.5 98.9 M744.5 76.5 L744.5 104.5 M715.5 104.5 L744.5 104.5" stroke="#333" stroke-width="1.05" fill="none"/>
<circle cx="742" cy="100" r="7.4" fill="#e1e2e1" stroke="#333" stroke-width="1.2"/><path d="M742 95.3 L742 104.7 M737.3 100 L746.7 100" stroke="#333" stroke-width="1.2"/>
<text x="759.3" y="85.6" font-size="5.2" font-family="Liberation Sans" fill="#333" textLength="12.5" lengthAdjust="spacingAndGlyphs">AUTO</text>
<path d="M775.9 76.3 L793.7 81.5 L788.6 99.6 L770.8 94.1 Z" fill="none" stroke="#333" stroke-width="1.1"/>
<path d="M769.6 89 Q766 91 764.1 93.7" fill="none" stroke="#333" stroke-width="0.9"/>
<path d="M760.3 93.3 L768.2 95.3 L762.5 101.4 Z" fill="none" stroke="#333" stroke-width="1.1" stroke-linejoin="round"/>
<rect x="763.5" y="104" width="29" height="3.2" rx="1.6" fill="none" stroke="#333" stroke-width="1.1"/>
<g fill="none" stroke="#333" stroke-width="1.3"><rect x="804.6" y="76.4" width="30.8" height="30.6" rx="0.8"/><rect x="808.6" y="79.3" width="24.2" height="8.4" rx="0.6"/><rect x="808.6" y="90.8" width="6.8" height="13.1" rx="0.6"/><rect x="818.3" y="90.6" width="14.5" height="5.4" rx="0.6"/><rect x="818.3" y="98.2" width="14.5" height="5.7" rx="0.6"/></g>
<g fill="none" stroke="#c5c7c5" stroke-width="1.3"><path d="M858.5 75.5 L871 75.5 L875 79.5 L875 101 L858.5 101 Z"/><path d="M864.5 81 L879 81 L883.5 85.5 L883.5 108.5 L864.5 108.5 Z" fill="#dcdddc"/><rect x="871" y="88" width="6.5" height="13" rx="3.2"/></g>
<g fill="none" stroke="#c5c7c5" stroke-width="1.3"><path d="M902 75.5 L915 75.5 L919 79.5 L919 101 L902 101 Z"/><path d="M908 81 L922.5 81 L927 85.5 L927 108.5 L908 108.5 Z" fill="#dcdddc"/><path d="M914 102 L914 89 L918.5 89 Q922 89 922 92.5 Q922 96 918.5 96 L914 96"/></g>
<g fill="none" stroke="#c5c7c5" stroke-width="1.3"><path d="M948 80 L975 80 M948 83.5 L975 83.5"/><rect x="948" y="87" width="27" height="4" rx="1"/><rect x="948" y="94" width="27" height="4" rx="1"/><rect x="948" y="101" width="27" height="4" rx="1"/></g>
<rect x="998.5" y="76" width="1.6" height="31" fill="#555"/>
<g fill="none" stroke="#c5c7c5" stroke-width="1.3"><path d="M1037 75 L1032 80 L1035 80 L1035 84 L1039 84 L1039 80 L1042 80 Z M1037 108.5 L1032 103.5 L1035 103.5 L1035 99.5 L1039 99.5 L1039 103.5 L1042 103.5 Z M1020 91.7 L1025 86.7 L1025 89.7 L1029 89.7 L1029 93.7 L1025 93.7 L1025 96.7 Z M1054 91.7 L1049 86.7 L1049 89.7 L1045 89.7 L1045 93.7 L1049 93.7 L1049 96.7 Z"/><rect x="1035" y="89.7" width="4" height="4"/><path d="M1075 78 Q1064 80 1064 91.7 Q1064 103 1075 106"/><path d="M1075 85 L1069 91.7 L1075 98"/></g>
</svg>
<svg class="a" style="left:0;top:0" width="655" height="1008" viewBox="420 67 655 1008">
<rect x="453.9" y="982.8" width="62" height="65.7" fill="#c8c8c8"/>
<path d="M453.9 998.5 L515.9 998.5 M453.9 1030.2 L515.9 1030.2" stroke="#a8a8a8" stroke-width="0.8"/>
<text x="484.2" y="1019.3" font-size="13.5" font-family="Liberation Sans" fill="#686868" text-anchor="middle">Top</text>
<rect x="451.5" y="988" width="2.4" height="61" fill="#79c57b"/>
<path d="M446 991 L452.7 979.5 L459 991 Z" fill="#79c57b"/>
<rect x="453" y="1048" width="58" height="2.6" fill="#cc7c78"/>
<path d="M509.5 1043.3 L521.5 1049.3 L509.5 1055.3 Z" fill="#cc7c78"/>
<path d="M446 1053.5 L452.5 1042 L458 1053.5 Z" fill="#8585cf"/>
<text x="448.3" y="970.5" font-size="12.5" font-family="Liberation Sans" fill="#79c57b">y</text>
<text x="530" y="1053" font-size="12" font-family="Liberation Sans" fill="#cc7c78">x</text>
<circle cx="574.5" cy="1048" r="18" fill="#d9dad9"/>
<g fill="none" stroke="#5f5f5f" stroke-width="1.8" stroke-linecap="round" stroke-linejoin="round"><path d="M565 1043 L565 1041 Q565 1038.5 567.5 1038.5 L569 1038.5 M580 1038.5 L581.5 1038.5 Q584 1038.5 584 1041 L584 1043 M584 1053 L584 1055 Q584 1057.5 581.5 1057.5 L580 1057.5 M569 1057.5 L567.5 1057.5 Q565 1057.5 565 1055 L565 1053"/><path d="M574.5 1041.5 L579.5 1044.3 L579.5 1050.5 L574.5 1053.3 L569.5 1050.5 L569.5 1044.3 Z M569.5 1044.3 L574.5 1047.2 L579.5 1044.3 M574.5 1047.2 L574.5 1053.3" stroke-width="1.4"/></g>
</svg>
</div>
</body></html>
